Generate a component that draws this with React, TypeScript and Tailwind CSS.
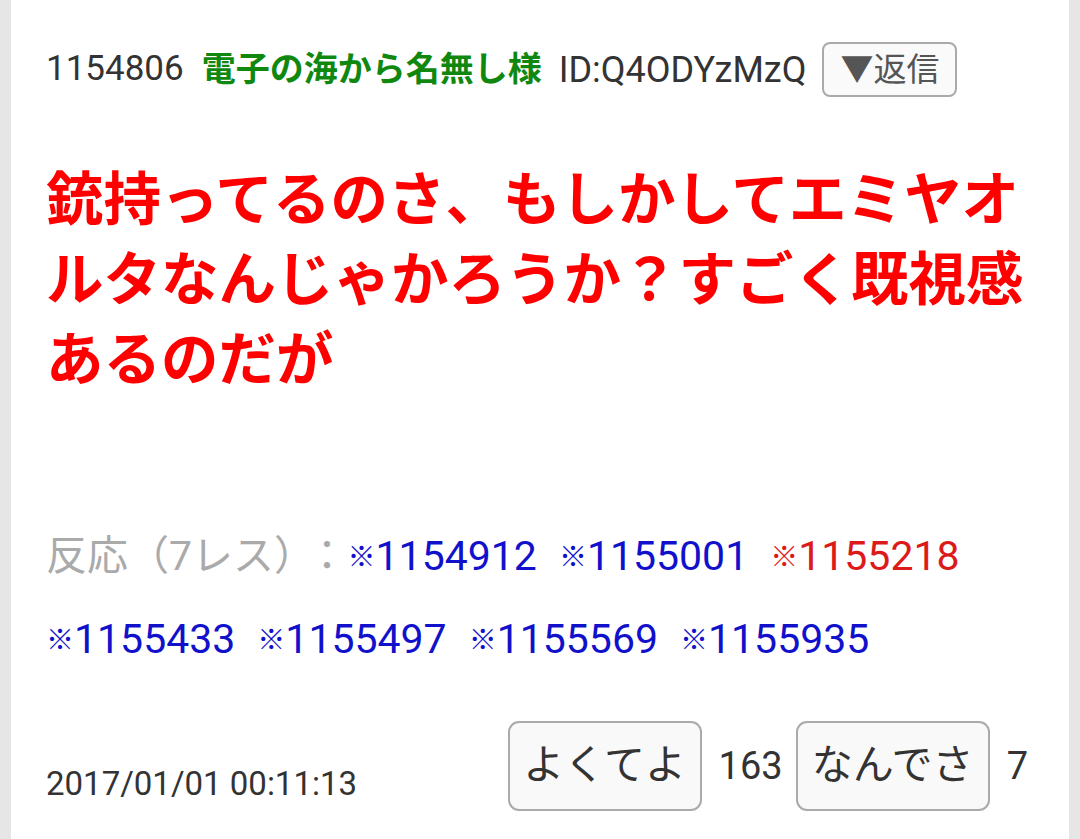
const font = "font-['Roboto','Noto_Sans_CJK_JP',sans-serif]";

const replies = [
  { no: "1154912", hot: false },
  { no: "1155001", hot: false },
  { no: "1155218", hot: true },
  { no: "1155433", hot: false },
  { no: "1155497", hot: false },
  { no: "1155569", hot: false },
  { no: "1155935", hot: false },
];

function VoteButton({ label }: { label: string }) {
  return (
    <button className="h-[90px] w-[194px] flex items-center justify-center rounded-[11px] border-2 border-[#aaaaaa] bg-[#f9f9f9] text-[41px] text-[#333333]">
      {label}
    </button>
  );
}

export default function App() {
  return (
    <div className={`min-h-[839px] bg-[#e6e6e6] px-[11px] ${font}`}>
      <div className="min-h-[839px] bg-white pl-[35px] pr-[29px] pt-[42px]">
        {/* header */}
        <div className="flex items-center text-[35px] text-[#333333]">
          <span>1154806</span>
          <span className="ml-[18px] text-[34px] font-bold text-[#108810]">電子の海から名無し様</span>
          <span className="ml-[17px] text-[36px]">ID:Q4ODYzMzQ</span>
          <button className="ml-[16px] h-[55px] px-[16px] flex items-center rounded-[8px] border-2 border-[#aaaaaa] bg-[#fafafa] text-[33px] text-[#555555]">
            ▼返信
          </button>
        </div>

        {/* body */}
        <p className="mt-[64px] pr-[6px] text-[57.5px] leading-[80px] font-bold text-[#ff0000]">
          銃持ってるのさ、もしかしてエミヤオルタなんじゃかろうか？すごく既視感あるのだが
        </p>

        {/* replies */}
        <div className="mt-[116px] pr-[6px] flex flex-wrap gap-x-[22px] text-[41px] leading-[79px]">
          <span className="text-[#aaaaaa] -mr-[22px]">
            反応（7レス）<span className="ml-[12px]">：</span>
          </span>
          {replies.map((r) => (
            <span key={r.no} className={r.hot ? "text-[#dd1a1a]" : "text-[#1111cc]"}>
              <span className="relative -top-[3px] text-[28px]">※</span>
              {r.no}
            </span>
          ))}
        </div>

        {/* footer */}
        <div className="mt-[38px] flex items-end justify-between">
          <span className="pb-[11px] text-[33px] leading-none text-[#333333]">2017/01/01 00:11:13</span>
          <div className="flex items-center text-[38px] text-[#333333]">
            <VoteButton label="よくてよ" />
            <span className="pl-[17px] pr-[13px]">163</span>
            <VoteButton label="なんでさ" />
            <span className="pl-[17px] pr-[12px]">7</span>
          </div>
        </div>
      </div>
    </div>
  );
}
